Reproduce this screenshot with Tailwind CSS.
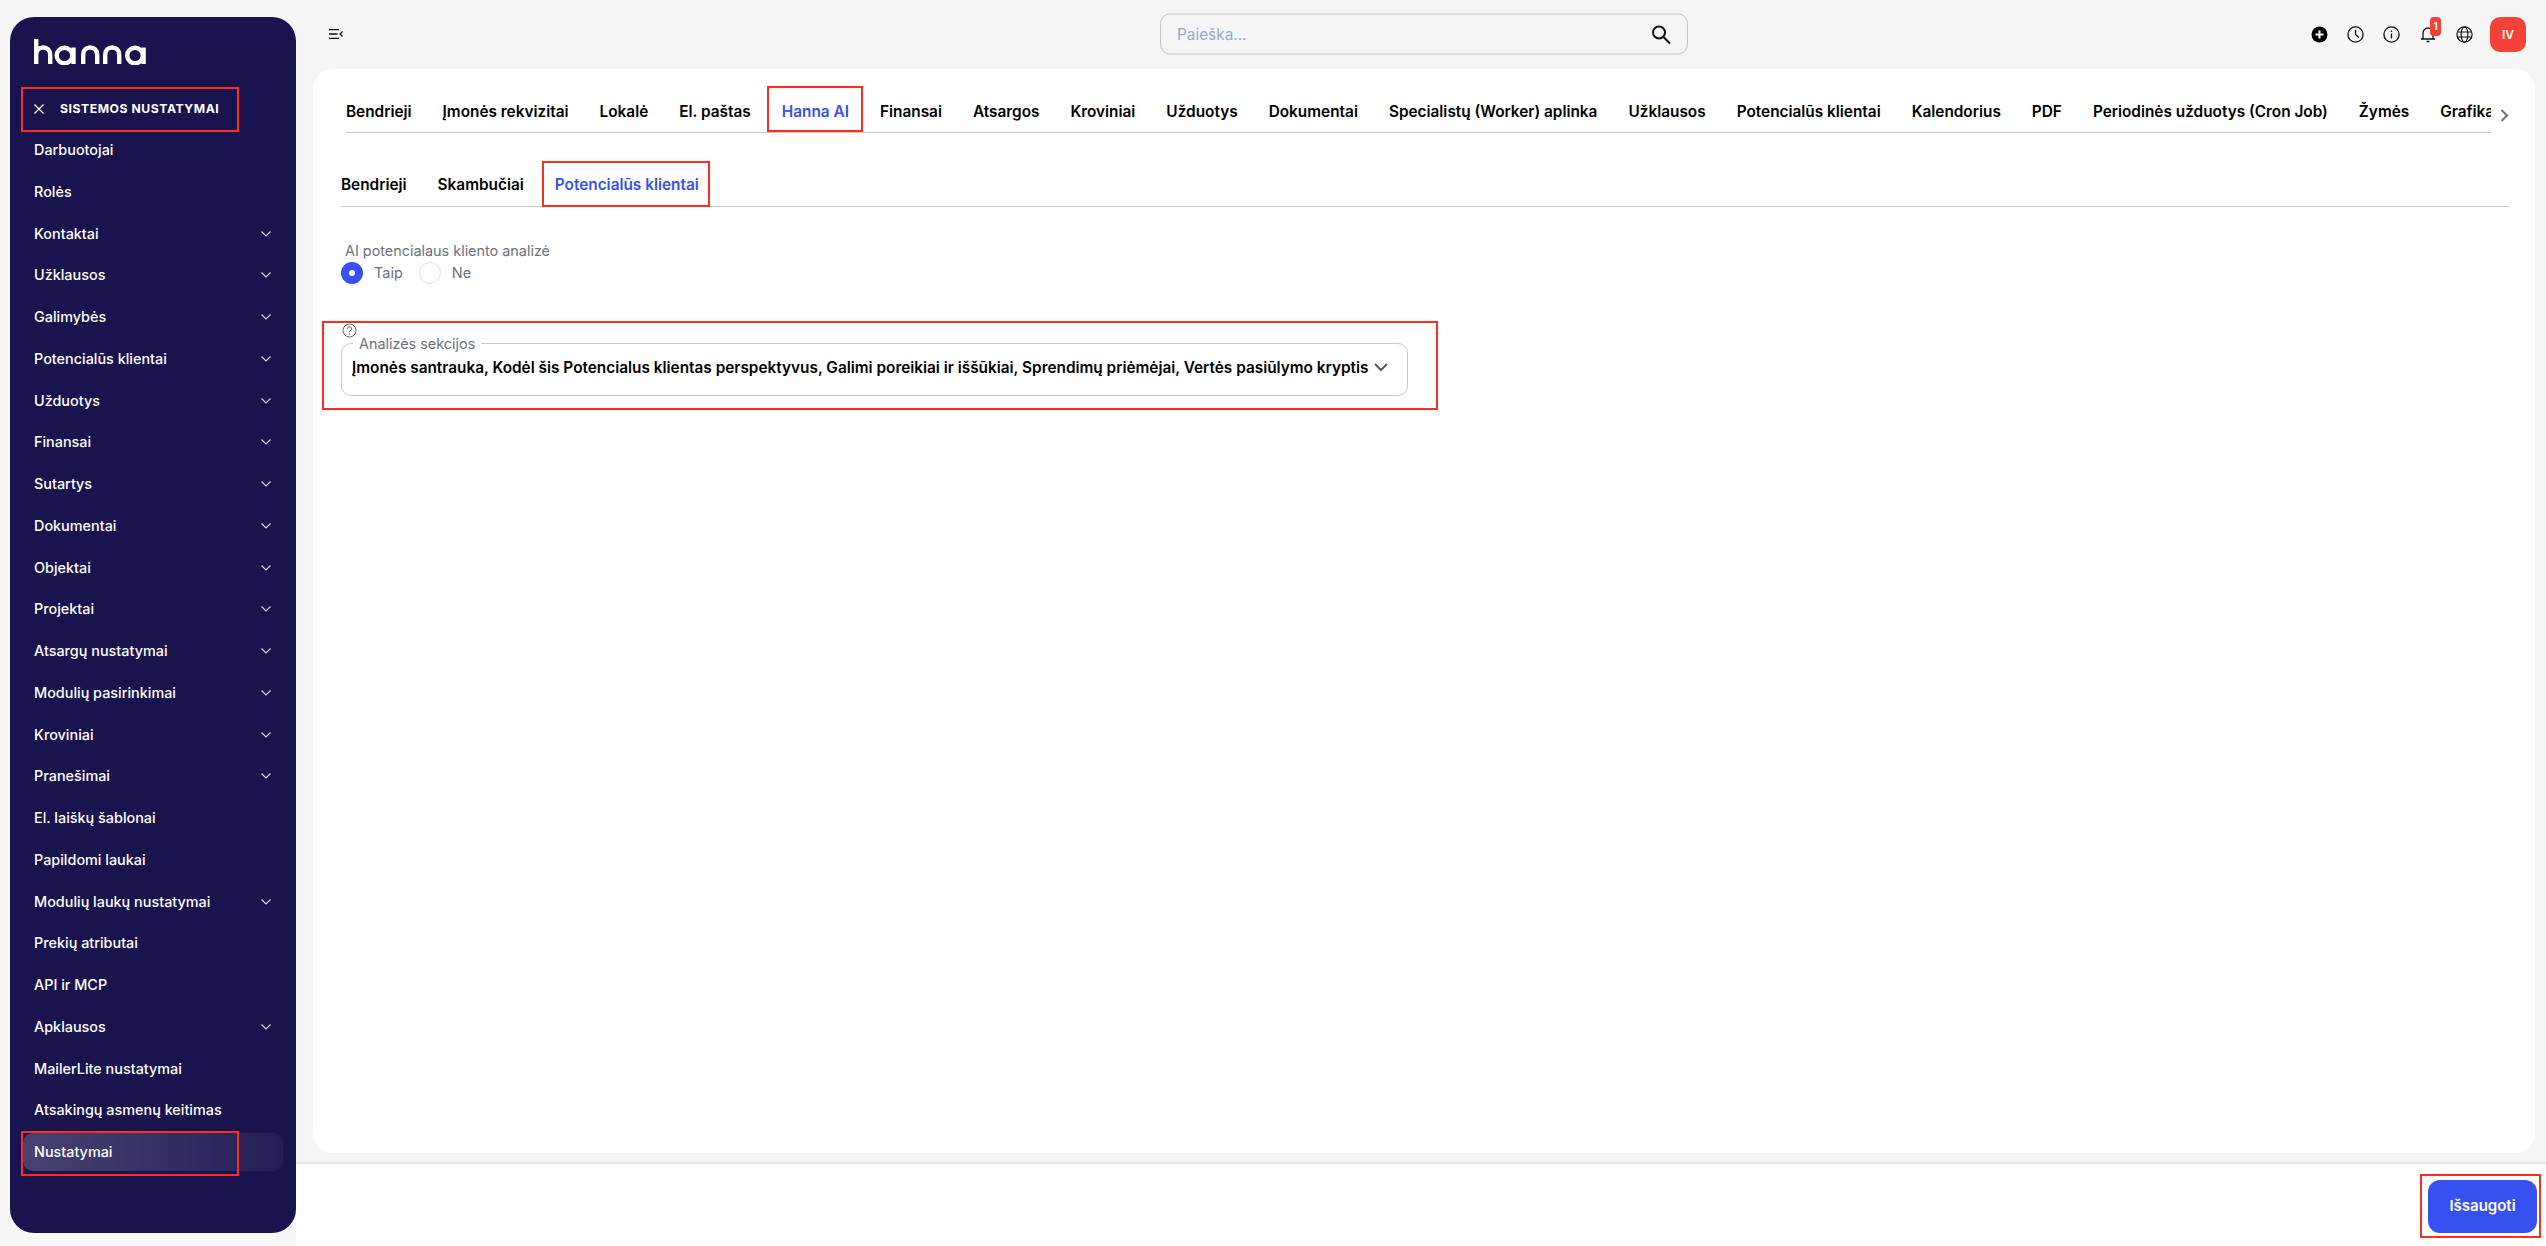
<!DOCTYPE html>
<html lang="lt">
<head>
  <meta charset="UTF-8" />
  <title>Hanna - Nustatymai</title>
  <script src="https://cdn.jsdelivr.net/npm/@tailwindcss/browser@4"></script>
</head>
<body class="bg-[#f6f6f6] text-black font-[Inter,sans-serif]">
  <div class="relative flex h-[1246px] w-full overflow-hidden">

    <!-- Sidebar -->
    <div class="w-[296px] shrink-0 pl-[10px] pt-[17px]">
      <aside class="h-[1216px] w-[286px] rounded-[24px] bg-[#19134e] text-white">
        <div class="pl-[24px] pt-[22px] h-[70px]">
          <svg width="112" height="26" viewBox="0 0 112 26" fill="none" stroke="white" stroke-width="4.4" role="img" aria-label="hanna">
            <path d="M2.2 0V25M2.2 16c0-5 3-7.500 7-7.500s7 2.500 7 7.500v9" />
            <circle cx="30.500" cy="16.500" r="7.800" />
            <path d="M39.500 8.500V25" />
            <path d="M49.200 25V16c0-5 3-7.500 7-7.500s7 2.500 7 7.500v9" />
            <path d="M71.200 25V16c0-5 3-7.500 7-7.500s7 2.500 7 7.500v9" />
            <circle cx="101" cy="16.500" r="7.800" />
            <path d="M109.600 8.500V25" />
          </svg>
        </div>
        <div class="flex h-[44px] items-center pl-[24px]">
          <svg width="10" height="10" viewBox="0 0 10 10" stroke="white" stroke-width="1.200"><path d="M.5.5l9 9M9.500.5l-9 9" /></svg>
          <span class="ml-[16px] text-[12.200px] font-bold tracking-[0.55px]">SISTEMOS NUSTATYMAI</span>
        </div>
        <nav class="flex flex-col gap-[3.75px] px-[13px] text-[14.400px] font-medium">
          <a class="flex h-[38px] items-center px-[11px]">Darbuotojai</a>
          <a class="flex h-[38px] items-center px-[11px]">Rolės</a>
          <a class="flex h-[38px] items-center justify-between px-[11px]">Kontaktai<svg class="mr-[1px]" width="10" height="6" viewBox="0 0 10 6" fill="none" stroke="#d6d4e4" stroke-width="1.200"><path d="M.5.5L5 5 9.500.5" /></svg></a>
          <a class="flex h-[38px] items-center justify-between px-[11px]">Užklausos<svg class="mr-[1px]" width="10" height="6" viewBox="0 0 10 6" fill="none" stroke="#d6d4e4" stroke-width="1.200"><path d="M.5.5L5 5 9.500.5" /></svg></a>
          <a class="flex h-[38px] items-center justify-between px-[11px]">Galimybės<svg class="mr-[1px]" width="10" height="6" viewBox="0 0 10 6" fill="none" stroke="#d6d4e4" stroke-width="1.200"><path d="M.5.5L5 5 9.500.5" /></svg></a>
          <a class="flex h-[38px] items-center justify-between px-[11px]">Potencialūs klientai<svg class="mr-[1px]" width="10" height="6" viewBox="0 0 10 6" fill="none" stroke="#d6d4e4" stroke-width="1.200"><path d="M.5.5L5 5 9.500.5" /></svg></a>
          <a class="flex h-[38px] items-center justify-between px-[11px]">Užduotys<svg class="mr-[1px]" width="10" height="6" viewBox="0 0 10 6" fill="none" stroke="#d6d4e4" stroke-width="1.200"><path d="M.5.5L5 5 9.500.5" /></svg></a>
          <a class="flex h-[38px] items-center justify-between px-[11px]">Finansai<svg class="mr-[1px]" width="10" height="6" viewBox="0 0 10 6" fill="none" stroke="#d6d4e4" stroke-width="1.200"><path d="M.5.5L5 5 9.500.5" /></svg></a>
          <a class="flex h-[38px] items-center justify-between px-[11px]">Sutartys<svg class="mr-[1px]" width="10" height="6" viewBox="0 0 10 6" fill="none" stroke="#d6d4e4" stroke-width="1.200"><path d="M.5.5L5 5 9.500.5" /></svg></a>
          <a class="flex h-[38px] items-center justify-between px-[11px]">Dokumentai<svg class="mr-[1px]" width="10" height="6" viewBox="0 0 10 6" fill="none" stroke="#d6d4e4" stroke-width="1.200"><path d="M.5.5L5 5 9.500.5" /></svg></a>
          <a class="flex h-[38px] items-center justify-between px-[11px]">Objektai<svg class="mr-[1px]" width="10" height="6" viewBox="0 0 10 6" fill="none" stroke="#d6d4e4" stroke-width="1.200"><path d="M.5.5L5 5 9.500.5" /></svg></a>
          <a class="flex h-[38px] items-center justify-between px-[11px]">Projektai<svg class="mr-[1px]" width="10" height="6" viewBox="0 0 10 6" fill="none" stroke="#d6d4e4" stroke-width="1.200"><path d="M.5.5L5 5 9.500.5" /></svg></a>
          <a class="flex h-[38px] items-center justify-between px-[11px]">Atsargų nustatymai<svg class="mr-[1px]" width="10" height="6" viewBox="0 0 10 6" fill="none" stroke="#d6d4e4" stroke-width="1.200"><path d="M.5.5L5 5 9.500.5" /></svg></a>
          <a class="flex h-[38px] items-center justify-between px-[11px]">Modulių pasirinkimai<svg class="mr-[1px]" width="10" height="6" viewBox="0 0 10 6" fill="none" stroke="#d6d4e4" stroke-width="1.200"><path d="M.5.5L5 5 9.500.5" /></svg></a>
          <a class="flex h-[38px] items-center justify-between px-[11px]">Kroviniai<svg class="mr-[1px]" width="10" height="6" viewBox="0 0 10 6" fill="none" stroke="#d6d4e4" stroke-width="1.200"><path d="M.5.5L5 5 9.500.5" /></svg></a>
          <a class="flex h-[38px] items-center justify-between px-[11px]">Pranešimai<svg class="mr-[1px]" width="10" height="6" viewBox="0 0 10 6" fill="none" stroke="#d6d4e4" stroke-width="1.200"><path d="M.5.5L5 5 9.500.5" /></svg></a>
          <a class="flex h-[38px] items-center px-[11px]">El. laiškų šablonai</a>
          <a class="flex h-[38px] items-center px-[11px]">Papildomi laukai</a>
          <a class="flex h-[38px] items-center justify-between px-[11px]">Modulių laukų nustatymai<svg class="mr-[1px]" width="10" height="6" viewBox="0 0 10 6" fill="none" stroke="#d6d4e4" stroke-width="1.200"><path d="M.5.5L5 5 9.500.5" /></svg></a>
          <a class="flex h-[38px] items-center px-[11px]">Prekių atributai</a>
          <a class="flex h-[38px] items-center px-[11px]">API ir MCP</a>
          <a class="flex h-[38px] items-center justify-between px-[11px]">Apklausos<svg class="mr-[1px]" width="10" height="6" viewBox="0 0 10 6" fill="none" stroke="#d6d4e4" stroke-width="1.200"><path d="M.5.5L5 5 9.500.5" /></svg></a>
          <a class="flex h-[38px] items-center px-[11px]">MailerLite nustatymai</a>
          <a class="flex h-[38px] items-center px-[11px]">Atsakingų asmenų keitimas</a>
          <a class="flex h-[38px] items-center rounded-[10px] bg-gradient-to-r from-white/20 to-white/5 px-[11px]">Nustatymai</a>
        </nav>
      </aside>
    </div>

    <!-- Right column -->
    <div class="flex min-w-0 flex-1 flex-col">
      <header class="relative flex h-[69px] shrink-0 items-center">
        <svg class="absolute left-[33px] top-[29px]" width="14" height="10" viewBox="0 0 14 10" fill="none" stroke="#111" stroke-width="1.300"><path d="M0 .7h10M0 5h8.500M0 9.300h10M13.500 2.500L11 5l2.500 2.500" /></svg>
        <div class="ml-[864px] flex h-[41px] w-[528px] -translate-y-[0.500px] items-center justify-between rounded-[10px] border border-[#c6c6c6] pl-[16px] pr-[15px]">
          <span class="text-[15.360px] text-[#9aaac8]">Paieška...</span>
          <svg width="22" height="22" viewBox="0 0 22 22" fill="none" stroke="#111" stroke-width="2"><circle cx="9" cy="9" r="6" /><path d="M13.500 13.500L20 20" /></svg>
        </div>
        <div class="ml-auto mr-[20px] flex items-center">
          <svg width="17" height="17" viewBox="0 0 17 17"><circle cx="8.500" cy="8.500" r="8" fill="#000" /><path d="M8.500 4.500v8M4.500 8.500h8" stroke="#fff" stroke-width="2" /></svg>
          <svg class="ml-[19px]" width="17" height="17" viewBox="0 0 17 17" fill="none" stroke="#111" stroke-width="1.300"><circle cx="8.500" cy="8.500" r="7.600" /><path d="M8.500 3.800v4.700l3.300 3" /></svg>
          <svg class="ml-[19px]" width="17" height="17" viewBox="0 0 17 17" fill="none" stroke="#111" stroke-width="1.300"><circle cx="8.500" cy="8.500" r="7.600" /><path d="M8.500 7.500v5M8.500 4.400v1.500" /></svg>
          <div class="relative ml-[20px] h-[17px] w-[16px]">
            <svg width="16" height="17" viewBox="0 0 16 17" fill="none" stroke="#111" stroke-width="1.300"><path d="M3 12.500V7a5 5 0 0 1 10 0v5.500M1 13h14M6.500 15.500h3" /></svg>
            <span class="absolute left-[10px] top-[-9px] flex h-[19px] w-[11px] items-center justify-center rounded-[4px] bg-[#f44336] text-[10px] font-semibold text-white">1</span>
          </div>
          <svg class="ml-[20px]" width="17" height="17" viewBox="0 0 17 17" fill="none" stroke="#111" stroke-width="1.200"><circle cx="8.500" cy="8.500" r="7.600" /><ellipse cx="8.500" cy="8.500" rx="3.400" ry="7.600" /><path d="M1.300 6h14.400M1.300 11h14.400" /></svg>
          <div class="ml-[17px] flex h-[35px] w-[36px] items-center justify-center rounded-[10px] bg-[#f44336] text-[12px] font-semibold text-white">IV</div>
        </div>
      </header>

      <main class="ml-[17px] mr-[11px] h-[1084px] shrink-0 rounded-[20px] bg-white pl-[28px] pt-[17px]">
        <!-- Main tabs -->
        <div class="flex items-start">
          <div class="ml-[5px] flex h-[47px] w-[2145px] gap-[31px] overflow-hidden border-b border-[#c8c8d0] pt-[14px] text-[15.360px] font-semibold whitespace-nowrap">
            <span>Bendrieji</span>
            <span>Įmonės rekvizitai</span>
            <span>Lokalė</span>
            <span>El. paštas</span>
            <span class="h-[33px] border-b-2 border-[#3751f0] text-[#3751f0]">Hanna AI</span>
            <span>Finansai</span>
            <span>Atsargos</span>
            <span>Kroviniai</span>
            <span>Užduotys</span>
            <span>Dokumentai</span>
            <span>Specialistų (Worker) aplinka</span>
            <span>Užklausos</span>
            <span>Potencialūs klientai</span>
            <span>Kalendorius</span>
            <span>PDF</span>
            <span>Periodinės užduotys (Cron Job)</span>
            <span>Žymės</span>
            <span>Grafikai</span>
          </div>
          <svg class="ml-[9px] mt-[23px]" width="9" height="13" viewBox="0 0 9 13" fill="none" stroke="#6b7280" stroke-width="2"><path d="M1.500 1l5.500 5.500L1.500 12" /></svg>
        </div>

        <!-- Sub tabs -->
        <div class="mt-[29px] flex h-[45px] w-[2168px] gap-[31px] border-b border-[#c8c8d0] pt-[11px] text-[15.360px] font-semibold whitespace-nowrap">
          <span>Bendrieji</span>
          <span>Skambučiai</span>
          <span class="h-[34px] border-b-2 border-[#3751f0] text-[#3751f0]">Potencialūs klientai</span>
        </div>

        <!-- Form -->
        <div class="mt-[34px]">
          <p class="ml-[4px] text-[14.400px] leading-[20px] text-[#6b7280]">AI potencialaus kliento analizė</p>
          <div class="mt-[1px] flex items-center text-[14.500px] text-[#6b7280]">
            <span class="flex h-[22px] w-[22px] items-center justify-center rounded-full bg-[#3751f0]"><span class="h-[6px] w-[6px] rounded-full bg-white"></span></span>
            <span class="ml-[11px]">Taip</span>
            <span class="ml-[16px] h-[22px] w-[22px] rounded-full border border-[#e2e4e8]"></span>
            <span class="ml-[11px]">Ne</span>
          </div>
          <svg class="ml-[1px] mt-[39px]" width="15" height="15" viewBox="0 0 15 15" fill="none" stroke="#666" stroke-width="1"><circle cx="7.500" cy="7.500" r="6.500" /><path d="M5.500 5.800a2 2 0 1 1 3 1.700c-.7.400-1 .8-1 1.500M7.500 10.400v1.100" /></svg>
          <fieldset class="mt-[-3px] h-[61px] w-[1067px] rounded-[10px] border border-[#c8c8c8] pl-[10px] pr-[19px]">
            <legend class="ml-[1px] px-[6px] text-[14.400px] leading-[17px] text-[#6b7280]">Analizės sekcijos</legend>
            <div class="mt-[4px] flex items-center">
              <span class="block w-[1017px] overflow-hidden text-[15.360px] font-semibold whitespace-nowrap">Įmonės santrauka, Kodėl šis Potencialus klientas perspektyvus, Galimi poreikiai ir iššūkiai, Sprendimų priėmėjai, Vertės pasiūlymo kryptis, Rekomenduojami veiksmai</span>
              <svg class="ml-[5px]" width="14" height="9" viewBox="0 0 14 9" fill="none" stroke="#555c68" stroke-width="2"><path d="M1 1l6 6 6-6" /></svg>
            </div>
          </fieldset>
        </div>
      </main>

      <div class="mt-[9px] flex flex-1 justify-end border-t-2 border-[#e8e8e8] bg-white pr-[9px] pt-[16px]">
        <button class="h-[53px] w-[109px] rounded-[12px] bg-[#3751f0] text-[15px] font-semibold text-white">Išsaugoti</button>
      </div>
    </div>

    <!-- Red annotation frames -->
    <div class="absolute left-[21px] top-[87px] h-[45px] w-[218px] border-[2.500px] border-[#ff2d20]"></div>
    <div class="absolute left-[21px] top-[1131px] h-[45px] w-[218px] border-[2.500px] border-[#ff2d20]"></div>
    <div class="absolute left-[767px] top-[86px] h-[46px] w-[96px] border-[2.500px] border-[#ff2d20]"></div>
    <div class="absolute left-[542px] top-[161px] h-[46px] w-[168px] border-[2.500px] border-[#ff2d20]"></div>
    <div class="absolute left-[322px] top-[321px] h-[89px] w-[1116px] border-[2.500px] border-[#ff2d20]"></div>
    <div class="absolute left-[2420px] top-[1174px] h-[64px] w-[121px] border-[2.500px] border-[#ff2d20]"></div>
  </div>
</body>
</html>
